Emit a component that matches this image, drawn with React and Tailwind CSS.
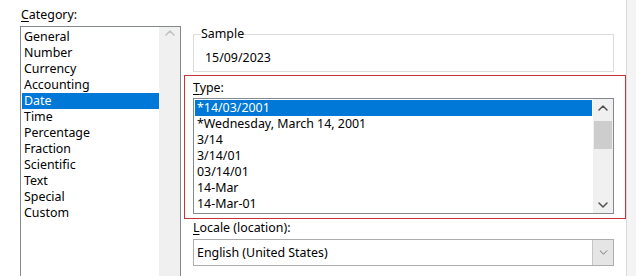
import React from "react";

const categories = [
  "General", "Number", "Currency", "Accounting", "Date", "Time",
  "Percentage", "Fraction", "Scientific", "Text", "Special", "Custom",
];
const types = [
  "*14/03/2001", "*Wednesday, March 14, 2001", "3/14", "3/14/01",
  "03/14/01", "14-Mar", "14-Mar-01",
];

function Chevron({ dir = "up", color = "#606060", w = 10, h = 6, sw = 1.4 }) {
  const d = dir === "up" ? "M1 5 L5 1 L9 5" : "M1 1 L5 5 L9 1";
  return (
    <svg width={w} height={h} viewBox="0 0 10 6" fill="none">
      <path d={d} stroke={color} strokeWidth={sw} strokeLinecap="round" strokeLinejoin="round" />
    </svg>
  );
}

export default function App() {
  return (
    <div
      className="w-[636px] h-[276px] overflow-hidden bg-white flex text-[12.4px] leading-[16px] text-black"
      style={{ fontFamily: '"Noto Sans", "Open Sans", sans-serif' }}
    >
      {/* Left column */}
      <div className="w-[184px] shrink-0 pl-[20px] pt-[7px] flex flex-col">
        <div className="h-[16px] pl-px">
          <span className="underline underline-offset-2">C</span>ategory:
        </div>
        <div className="mt-[3px] w-[161px] h-[260px] border border-[#828790] flex shrink-0">
          <div className="w-[138px] pl-px pt-[2px]">
            {categories.map((c) => (
              <div
                key={c}
                className={
                  "h-[16px] pl-[2px] " +
                  (c === "Date" ? "bg-[#0078d7] text-white" : "")
                }
              >
                {c}
              </div>
            ))}
          </div>
          <div className="w-[21px] bg-[#f0f0f0] flex flex-col items-center">
            <div className="h-[17px] pt-[3px] flex items-start justify-center">
              <Chevron dir="up" color="#c2c2c2" sw={1.6} />
            </div>
          </div>
        </div>
      </div>

      {/* Middle column */}
      <div className="w-[442px] shrink-0 pt-[26px] flex flex-col">
        <fieldset className="ml-[9px] w-[421px] border border-[#dcdcdc] pl-[7px] pb-[5px]">
          <legend className="h-[16px] leading-[16px]">Sample</legend>
          <div className="pt-[8px] pl-[4px] h-[24px]">15/09/2023</div>
        </fieldset>

        <div className="mt-[3px] w-[442px] border border-[#c8323f] pl-[8px] pt-[4px] pb-[4px]">
          <div className="h-[16px]">
            <span className="underline underline-offset-2">T</span>ype:
          </div>
          <div className="mt-[2px] w-[421px] h-[116px] border border-[#828790] flex">
            <div className="flex-1 p-px">
              {types.map((t, i) => (
                <div
                  key={t}
                  className={
                    "h-[16px] pl-[2px] " +
                    (i === 0 ? "bg-[#0078d7] text-white" : "")
                  }
                >
                  {t}
                </div>
              ))}
            </div>
            <div className="w-[20px] bg-[#f0f0f0] flex flex-col">
              <div className="h-[17px] flex items-center justify-center">
                <Chevron dir="up" color="#505050" sw={1.5} />
              </div>
              <div className="flex-1 pt-[5px] px-px">
                <div className="h-[28px] bg-[#cdcdcd]" />
              </div>
              <div className="h-[17px] flex items-center justify-center">
                <Chevron dir="down" color="#505050" sw={1.5} />
              </div>
            </div>
          </div>
        </div>

        <div className="h-[16px] pl-[9px] mt-px">
          <span className="underline underline-offset-2">L</span>ocale (location):
        </div>
        <div className="mt-[3px] ml-[9px] w-[421px] h-[27px] border border-[#adadad] flex items-stretch">
          <div className="flex-1 pl-[3px] flex items-center">English (United States)</div>
          <div className="w-[21px] bg-[#e5e5e5] border-l border-[#c4c4c4] flex items-center justify-center">
            <Chevron dir="down" color="#606060" w={9} h={5} sw={1} />
          </div>
        </div>
      </div>

      {/* Right strip */}
      <div className="flex-1 border-l border-[#dadada] bg-[#f4f4f4]" />
    </div>
  );
}
